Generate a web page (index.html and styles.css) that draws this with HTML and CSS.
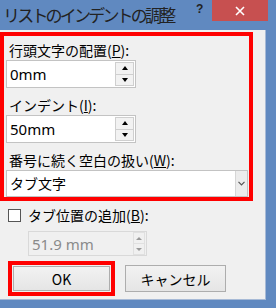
FILE: index.html
```html
<!DOCTYPE html>
<html lang="ja">
<head>
    <meta charset="UTF-8">
    <title>リストのインデントの調整</title>
    <link rel="stylesheet" href="styles.css">
</head>
<body>
    <div class="window">
        <div class="titlebar">
            <span class="title">リストのインデントの調整</span>
            <span class="help">?</span>
            <span class="close">
                <svg width="10" height="10" viewBox="0 0 10 10">
                    <path d="M1 1 L9 9 M9 1 L1 9" stroke="#fff" stroke-width="1.6"/>
                </svg>
            </span>
        </div>
        <div class="client">
            <div class="group">
                <label class="label first">行頭文字の配置(<u>P</u>):</label>
                <div class="field">
                    <span class="value">0mm</span>
                    <div class="spin">
                        <span class="spin-btn"><i class="arrow-up"></i></span>
                        <span class="spin-btn"><i class="arrow-down"></i></span>
                    </div>
                </div>
                <label class="label">インデント(<u>I</u>):</label>
                <div class="field">
                    <span class="value">50mm</span>
                    <div class="spin">
                        <span class="spin-btn"><i class="arrow-up"></i></span>
                        <span class="spin-btn"><i class="arrow-down"></i></span>
                    </div>
                </div>
                <label class="label">番号に続く空白の扱い(<u>W</u>):</label>
                <div class="select">
                    <span class="select-text">タブ文字</span>
                    <span class="drop">
                        <svg width="7" height="5" viewBox="0 0 7 5">
                            <path d="M0.5 0.8 L3.5 3.8 L6.5 0.8" stroke="#555" stroke-width="1.2" fill="none"/>
                        </svg>
                    </span>
                </div>
            </div>
            <div class="check-row">
                <span class="checkbox"></span>
                <span class="check-label">タブ位置の追加(<u>B</u>):</span>
            </div>
            <div class="field disabled">
                <span class="value">51.9 mm</span>
                <div class="spin">
                    <span class="spin-btn"><i class="arrow-up"></i></span>
                    <span class="spin-btn"><i class="arrow-down"></i></span>
                </div>
            </div>
            <div class="buttons">
                <div class="ok-wrap">
                    <button class="btn ok">OK</button>
                </div>
                <button class="btn cancel">キャンセル</button>
            </div>
        </div>
    </div>
</body>
</html>
```

FILE: styles.css
```css
body {
    margin: 0;
    background-color: #6089c0;
    font-family: "Noto Sans CJK JP", sans-serif;
    color: #000;
}
.window {
    width: 276px;
    height: 308px;
    display: flex;
    flex-direction: column;
}
.titlebar {
    height: 30px;
    display: flex;
    align-items: flex-start;
    flex-shrink: 0;
}
.title {
    flex: 1;
    white-space: nowrap;
    overflow: hidden;
    font-size: 17px;
    letter-spacing: -2.8px;
    line-height: 24px;
    color: #222;
    margin: 3px 0 0 3px;
}
.help {
    font-family: "Liberation Sans", sans-serif;
    font-size: 12px;
    font-weight: bold;
    line-height: 14px;
    color: #222;
    margin-top: 2px;
    width: 16px;
}
.close {
    width: 56px;
    height: 21px;
    background-color: #c75050;
    margin-right: 8px;
    display: flex;
    align-items: center;
    justify-content: center;
}
.client {
    width: 266px;
    height: 270px;
    box-sizing: border-box;
    background-color: #f0f0f0;
    border-right: 1px solid #a7bad6;
    border-bottom: 1px solid #a7bad6;
    overflow: hidden;
}
.group {
    margin-top: 2px;
    width: 253px;
    box-sizing: border-box;
    border: 4px solid #ff0000;
    padding-left: 2px;
}
.label {
    display: block;
    font-size: 14px;
    line-height: 20px;
    margin: 7px 0 0 3px;
}
.label.first {
    margin-top: 4px;
}
.field {
    width: 130px;
    height: 28px;
    box-sizing: border-box;
    border: 1px solid #c3c3c3;
    background-color: #fff;
    display: flex;
    align-items: center;
}
.value {
    flex: 1;
    padding-left: 3px;
    font-family: "Noto Sans", sans-serif;
    font-size: 15px;
    line-height: 20px;
}
.spin {
    width: 19px;
    height: 24px;
    margin-right: 1px;
    display: flex;
    flex-direction: column;
}
.spin-btn {
    flex: 1;
    box-sizing: border-box;
    border: 1px solid #cfcfcf;
    background-color: #f2f2f2;
    display: flex;
    align-items: center;
    justify-content: center;
}
.spin-btn + .spin-btn {
    border-top: none;
}
.arrow-up {
    width: 0;
    height: 0;
    border-left: 3.5px solid transparent;
    border-right: 3.5px solid transparent;
    border-bottom: 4px solid #000;
}
.arrow-down {
    width: 0;
    height: 0;
    border-left: 3.5px solid transparent;
    border-right: 3.5px solid transparent;
    border-top: 4px solid #000;
}
.select {
    width: 242px;
    height: 27px;
    box-sizing: border-box;
    border: 1px solid #c3c3c3;
    background-color: #fff;
    display: flex;
}
.select-text {
    flex: 1;
    font-size: 14px;
    line-height: 25px;
    padding-left: 3px;
}
.drop {
    width: 11px;
    background-color: #ececec;
    border-left: 1px solid #d6d6d6;
    display: flex;
    align-items: center;
    justify-content: center;
}
.check-row {
    margin-top: 4px;
    height: 20px;
    padding-left: 8px;
    display: flex;
    align-items: center;
}
.checkbox {
    width: 13px;
    height: 13px;
    box-sizing: border-box;
    border: 1px solid #555;
    background-color: #fff;
}
.check-label {
    margin-left: 7px;
    font-size: 14px;
    line-height: 20px;
}
.field.disabled {
    margin: 6px 0 0 28px;
    width: 119px;
    height: 25px;
    border-color: #d9d9d9;
    background-color: #f0f0f0;
}
.field.disabled .value {
    color: #8a8a8a;
}
.field.disabled .spin {
    width: 12px;
    height: 23px;
}
.field.disabled .spin-btn {
    border-color: #e0e0e0;
    background-color: #f0f0f0;
}
.field.disabled .arrow-up {
    border-bottom-color: #999;
    border-left-width: 3px;
    border-right-width: 3px;
    border-bottom-width: 3px;
}
.field.disabled .arrow-down {
    border-top-color: #999;
    border-left-width: 3px;
    border-right-width: 3px;
    border-top-width: 3px;
}
.buttons {
    margin-top: 5px;
    padding-left: 8px;
    display: flex;
    align-items: center;
}
.ok-wrap {
    border: 4px solid #ff0000;
    padding: 1px;
    display: flex;
}
.btn {
    height: 25px;
    box-sizing: border-box;
    border: 1px solid #adadad;
    background: linear-gradient(#f2f2f2, #e5e5e5);
    font-family: "Noto Sans CJK JP", sans-serif;
    font-size: 14px;
    color: #000;
    padding: 0;
}
.ok {
    width: 97px;
}
.cancel {
    width: 101px;
    height: 27px;
    margin-left: 10px;
}
```
